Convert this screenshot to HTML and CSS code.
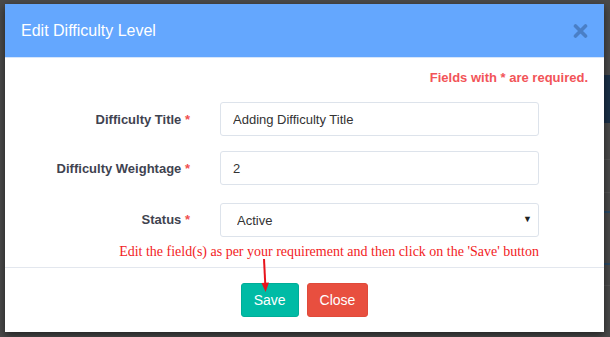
FILE: index.html
```html
<!DOCTYPE html>
<html lang="en">
<head>
  <meta charset="UTF-8">
  <title>Edit Difficulty Level</title>
  <link rel="stylesheet" href="styles.css">
</head>
<body>
  <div class="modal">
    <div class="modal-header">
      <h4>Edit Difficulty Level</h4>
      <button class="close" aria-label="Close">
        <svg width="15" height="14" viewBox="0 0 15 14"><path d="M2.5 2L12.5 12M12.5 2L2.5 12" stroke="#4a7fc6" stroke-width="3.6" stroke-linecap="round"/></svg>
      </button>
    </div>

    <div class="modal-body">
      <div class="required-note">Fields with * are required.</div>

      <form class="form-grid">
        <label for="title">Difficulty Title <span class="req">*</span></label>
        <input id="title" class="form-control" value="Adding Difficulty Title">

        <label for="weight">Difficulty Weightage <span class="req">*</span></label>
        <input id="weight" class="form-control" value="2">

        <label for="status" class="status-label">Status <span class="req">*</span></label>
        <div class="select-wrap status-field">
          <select id="status" class="form-control">
            <option>Active</option>
            <option>Inactive</option>
          </select>
        </div>

        <div class="hint">Edit the field(s) as per your requirement and then click on the 'Save' button</div>
      </form>
    </div>

    <div class="modal-footer">
      <button class="btn btn-save">Save</button>
      <button class="btn btn-close">Close</button>
    </div>

    <svg class="pointer" width="14" height="36" viewBox="0 0 14 36">
      <path d="M6 1L7.3 27" stroke="#e8141c" stroke-width="2" fill="none"/>
      <path d="M3.5 25L11 24.6L7.6 34Z" fill="#e8141c"/>
    </svg>
  </div>
</body>
</html>
```

FILE: styles.css
```css
html, body { margin:0; padding:0; }
body {
  width:610px; height:337px; overflow:hidden;
  font-family:"Liberation Sans", Arial, sans-serif;
  background-color:#4a4a4a;
  background-image:
    linear-gradient(#1c3148,#1c3148),
    linear-gradient(#2a4a66,#2a4a66),
    linear-gradient(#2a4a66,#2a4a66),
    linear-gradient(#555,#555),
    linear-gradient(#555,#555),
    linear-gradient(#555,#555);
  background-repeat:no-repeat;
  background-size:6px 48px, 6px 2px, 6px 2px, 6px 1px, 6px 1px, 6px 1px;
  background-position:right 0 top 75px, right 0 top 211px, right 0 top 263px,
                      right 0 top 159px, right 0 top 192px, right 0 top 285px;
}

.modal {
  position:relative;
  width:599px; margin:4px 0 0 5px;
  background:#fff;
  box-shadow:0 3px 8px rgba(0,0,0,.55);
}

.modal-header {
  height:54px; padding:0 16px;
  display:flex; align-items:center; justify-content:space-between;
  background:#64a7fe;
  border-bottom:1px solid #d6e6fb;
  box-sizing:border-box;
}
.modal-header h4 { margin:0; font-size:16px; font-weight:normal; color:#fff; }
.close { border:none; background:none; padding:0; margin-right:0; cursor:pointer; display:flex; }

.modal-body { padding:12px 16px 7px 15px; }
.required-note {
  text-align:right; font-size:13px; line-height:16px; font-weight:bold; color:#f25458;
}

.form-grid {
  display:grid; grid-template-columns:170px 319px; column-gap:30px; row-gap:15px;
  align-items:center; margin-top:16px;
}
.form-grid label {
  text-align:right; font-size:13px; font-weight:bold; color:#3f4350;
}
.req { color:#f05050; }

.form-control {
  width:100%; height:34px; box-sizing:border-box;
  padding:0 12px; border:1px solid #dde3eb; border-radius:3px;
  font-family:inherit; font-size:13px; color:#333; background:#fff;
}
.status-label { margin-top:1px; }
.status-field { margin-top:3px; }
.select-wrap { position:relative; }
.select-wrap select { -webkit-appearance:none; appearance:none; padding-left:16px; }
.select-wrap::after {
  content:"▼"; position:absolute; right:7px; top:11px;
  font-size:9px; color:#222; pointer-events:none;
}

.hint {
  grid-column:1 / 3; text-align:right; margin-top:-8px;
  font-family:"Liberation Serif", "Times New Roman", serif;
  font-size:14px; line-height:16px; color:#f21c24;
}

.modal-footer {
  display:flex; justify-content:center; gap:8px;
  padding:15px 0 15px; border-top:1px solid #e3e7ee;
}
.btn {
  height:34px; padding:0 12px; border:1px solid transparent; border-radius:3px;
  font-family:inherit; font-size:14px; color:#fff; cursor:pointer;
}
.btn-save { background:#00bba5; border-color:#00ad98; }
.btn-close { background:#e84f3f; border-color:#e04a3a; }

.pointer { position:absolute; left:253px; top:254px; }
```
